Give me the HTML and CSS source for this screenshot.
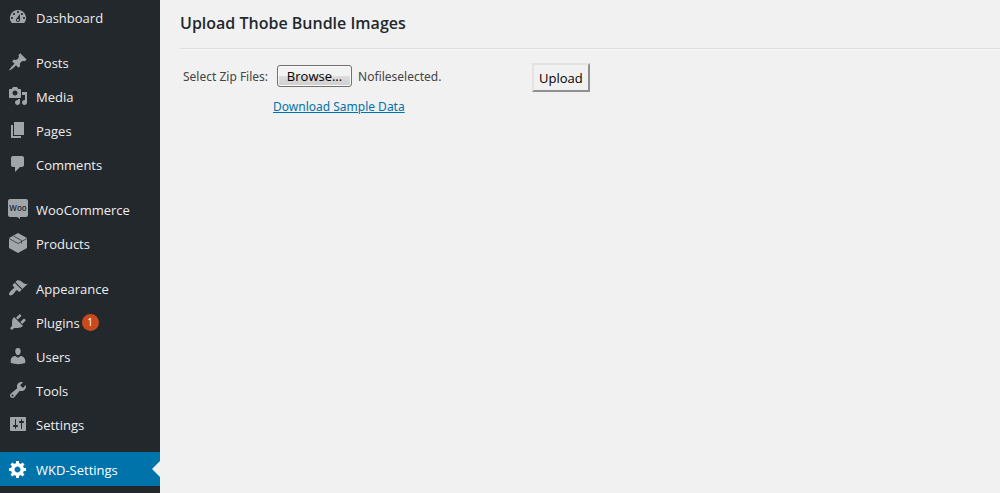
FILE: index.html
```html
<!DOCTYPE html>
<html lang="en">
<head>
    <meta charset="UTF-8">
    <meta name="viewport" content="width=device-width, initial-scale=1.0">
    <title>Upload Thobe Bundle Images</title>
    <link rel="stylesheet" href="styles.css">
</head>
<body>
    <nav class="sidebar">
        <ul class="menu">
            <li><a href="#dashboard">
                <svg class="icon" viewBox="0 0 20 20"><path d="M3.76 16h12.48A7.998 7.998 0 0 0 10 3a7.998 7.998 0 0 0-6.24 13zM10 4c.55 0 1 .45 1 1s-.45 1-1 1-1-.45-1-1 .45-1 1-1zM6 6c.55 0 1 .45 1 1s-.45 1-1 1-1-.45-1-1 .45-1 1-1zm8 0c.55 0 1 .45 1 1s-.45 1-1 1-1-.45-1-1 .45-1 1-1zm-5.37 5.55L12 7v6c0 1.1-.9 2-2 2s-2-.9-2-2c0-.57.24-1.08.63-1.45zM4 10c.55 0 1 .45 1 1s-.45 1-1 1-1-.45-1-1 .45-1 1-1zm12 0c.55 0 1 .45 1 1s-.45 1-1 1-1-.45-1-1 .45-1 1-1zm-5 3c0-.55-.45-1-1-1s-1 .45-1 1 .45 1 1 1 1-.45 1-1z"/></svg>
                <span class="name">Dashboard</span></a></li>
            <li class="group"><a href="#posts">
                <svg class="icon" viewBox="0 0 20 20"><path d="M10.44 3.02l1.82-1.82 6.36 6.35-1.83 1.82c-1.05-.68-2.48-.57-3.41.36l-.75.75c-.92.93-1.04 2.35-.35 3.41l-1.83 1.82-2.41-2.41-2.8 2.79c-.42.42-3.38 2.71-3.8 2.29s1.86-3.39 2.28-3.81l2.79-2.79L4.1 9.36l1.83-1.82c1.05.69 2.48.57 3.4-.36l.75-.75c.93-.92 1.05-2.35.36-3.41z"/></svg>
                <span class="name">Posts</span></a></li>
            <li><a href="#media">
                <svg class="icon" viewBox="0 0 20 20"><path d="M13 11V4c0-.55-.45-1-1-1h-1.67L9 1H5L3.67 3H2c-.55 0-1 .45-1 1v7c0 .55.45 1 1 1h10c.55 0 1-.45 1-1zM7 4.5c1.38 0 2.5 1.12 2.5 2.5S8.38 9.5 7 9.5 4.5 8.38 4.5 7 5.62 4.5 7 4.5zM14 6h5v10.5c0 1.38-1.12 2.5-2.5 2.5S14 17.88 14 16.5s1.12-2.5 2.5-2.5c.17 0 .34.02.5.05V9h-3V6zm-4 8.05V13h2v3.5c0 1.38-1.12 2.5-2.5 2.5S7 17.88 7 16.5 8.12 14 9.5 14c.17 0 .34.02.5.05z"/></svg>
                <span class="name">Media</span></a></li>
            <li><a href="#pages">
                <svg class="icon" viewBox="0 0 20 20"><path d="M6 15V2h10v13H6zm-1 1h8v2H3V5h2v11z"/></svg>
                <span class="name">Pages</span></a></li>
            <li><a href="#comments">
                <svg class="icon" viewBox="0 0 20 20"><path d="M5 2h9c1.1 0 2 .9 2 2v7c0 1.1-.9 2-2 2h-2l-5 5v-5H5c-1.1 0-2-.9-2-2V4c0-1.1.9-2 2-2z"/></svg>
                <span class="name">Comments</span></a></li>
            <li class="group"><a href="#woocommerce">
                <svg class="icon" viewBox="0 0 20 20"><path d="M2 0h16a2 2 0 0 1 2 2v14a2 2 0 0 1-2 2h-6v2l-3-2H2a2 2 0 0 1-2-2V2a2 2 0 0 1 2-2z"/><text class="woo" x="10" y="12" text-anchor="middle">Woo</text></svg>
                <span class="name">WooCommerce</span></a></li>
            <li><a href="#products">
                <svg class="icon" viewBox="0 0 20 20"><path d="M10 0l9 5v10l-9 5-9-5V5z"/><path class="seam" d="M1 5.5l9 5 9-5M5.5 3l8 4.500v3"/></svg>
                <span class="name">Products</span></a></li>
            <li class="group"><a href="#appearance">
                <svg class="icon" viewBox="0 0 20 20"><path d="M14.48 11.06L7.41 3.99l1.5-1.5c.5-.56 2.3-.47 3.51.32 1.21.8 1.43 1.28 2.91 2.1 1.18.64 2.45 1.26 4.45.85zm-.71.71L6.7 4.7 4.93 6.47c-.39.39-.39 1.02 0 1.41l1.06 1.06c.39.39.39 1.03 0 1.42-.6.6-1.43 1.11-2.21 1.69-.35.26-.7.53-1.01.84C1.43 14.23.4 16.08 1.4 17.07c.99 1 2.84-.03 4.18-1.36.31-.31.58-.66.85-1.02.57-.78 1.08-1.61 1.69-2.21.39-.39 1.02-.39 1.41 0l1.06 1.06c.39.39 1.02.39 1.41 0z"/></svg>
                <span class="name">Appearance</span></a></li>
            <li><a href="#plugins">
                <svg class="icon" viewBox="0 0 20 20"><path d="M13.11 4.36L9.87 7.6 8 5.73l3.24-3.24c.35-.34 1.05-.2 1.56.32.52.51.66 1.21.31 1.55zm-8 1.77l.91-1.12 9.01 9.01-1.19.84c-.71.71-2.63 1.16-3.82 1.16H6.14L4.9 17.26c-.59.59-1.54.59-2.12 0-.59-.58-.59-1.53 0-2.12l1.24-1.24v-3.88c0-1.13.4-3.19 1.09-3.89zm7.26 3.97l3.24-3.24c.34-.35 1.04-.21 1.55.31.52.51.66 1.21.31 1.55l-3.24 3.25z"/></svg>
                <span class="name">Plugins</span><span class="badge">1</span></a></li>
            <li><a href="#users">
                <svg class="icon" viewBox="0 0 20 20"><path d="M10 9.25c-2.27 0-2.73-3.44-2.73-3.44C7 4.02 7.82 2 9.97 2c2.16 0 2.98 2.02 2.71 3.81 0 0-.41 3.44-2.68 3.44zm0 2.57L12.72 10c2.39 0 4.52 2.33 4.52 4.53v2.49s-3.65 1.13-7.24 1.13c-3.65 0-7.24-1.13-7.24-1.13v-2.49c0-2.25 1.94-4.48 4.47-4.48z"/></svg>
                <span class="name">Users</span></a></li>
            <li><a href="#tools">
                <svg class="icon" viewBox="0 0 20 20"><path d="M16.68 9.77c-1.34 1.34-3.3 1.67-4.95.99l-5.41 6.52c-.99.99-2.59.99-3.58 0s-.99-2.59 0-3.57l6.52-5.42c-.68-1.65-.35-3.61.99-4.95 1.28-1.28 3.12-1.62 4.72-1.06l-2.89 2.89 2.82 2.82 2.86-2.87c.53 1.58.18 3.39-1.08 4.65zM3.81 16.21c.4.39 1.04.39 1.43 0 .4-.4.4-1.04 0-1.43-.39-.4-1.03-.4-1.43 0-.39.39-.39 1.03 0 1.43z"/></svg>
                <span class="name">Tools</span></a></li>
            <li><a href="#settings">
                <svg class="icon" viewBox="0 0 20 20"><path d="M18 16V4c0-.55-.45-1-1-1H3c-.55 0-1 .45-1 1v12c0 .55.45 1 1 1h14c.55 0 1-.45 1-1zM8 11h1c.55 0 1 .45 1 1s-.45 1-1 1H8v1.5c0 .28-.22.5-.5.5s-.5-.22-.5-.5V13H6c-.55 0-1-.45-1-1s.45-1 1-1h1V5.5c0-.28.22-.5.5-.5s.5.22.5.5V11zm5-2h-1c-.55 0-1-.45-1-1s.45-1 1-1h1V5.5c0-.28.22-.5.5-.5s.5.22.5.5V7h1c.55 0 1 .45 1 1s-.45 1-1 1h-1v5.5c0 .28-.22.5-.5.5s-.5-.22-.5-.5V9z"/></svg>
                <span class="name">Settings</span></a></li>
            <li class="group active"><a href="#wkd-settings">
                <svg class="icon" viewBox="0 0 20 20"><path d="M18 12h-2.18c-.17.7-.44 1.35-.81 1.93l1.54 1.54-2.1 2.1-1.54-1.54c-.58.36-1.23.63-1.91.79V19H8v-2.18c-.68-.16-1.33-.43-1.91-.79l-1.54 1.54-2.12-2.12 1.54-1.54c-.36-.58-.63-1.23-.79-1.91H1V9.03h2.17c.16-.7.44-1.35.8-1.94L2.43 5.55l2.1-2.1 1.54 1.54c.58-.37 1.24-.64 1.93-.81V2h3v2.18c.68.16 1.33.43 1.91.79l1.54-1.54 2.12 2.12-1.54 1.54c.36.59.64 1.24.8 1.94H18V12zm-8.5 1.5c1.66 0 3-1.34 3-3s-1.34-3-3-3-3 1.34-3 3 1.34 3 3 3z"/></svg>
                <span class="name">WKD-Settings</span></a></li>
        </ul>
    </nav>

    <main class="content">
        <h1>Upload Thobe Bundle Images</h1>
        <form class="upload-form">
            <div class="picker">
                <div class="file-row">
                    <label for="zip">Select Zip Files:</label>
                    <input class="file-input" type="file" id="zip" accept=".zip" tabindex="-1">
                    <button class="browse" type="button" id="browse">Browse...</button>
                    <span id="file-name">Nofileselected.</span>
                </div>
                <a class="sample" href="#sample">Download Sample Data</a>
            </div>
            <button class="upload" type="submit">Upload</button>
        </form>
    </main>

    <script>
        const zip = document.getElementById('zip');

        document.getElementById('browse').addEventListener('click', function() {
            zip.click();
        });

        // Show the chosen file next to the button
        zip.addEventListener('change', function() {
            if (zip.files.length) {
                document.getElementById('file-name').textContent = zip.files[0].name;
            }
        });
    </script>
</body>
</html>
```
FILE: styles.css
```css
body {
    display: flex;
    min-height: 100vh;
    margin: 0;
    background: #f1f1f1;
    color: #444;
    font-family: "Noto Sans", "Open Sans", sans-serif;
    font-size: 12px;
}

/* Admin menu */
.sidebar {
    flex: 0 0 160px;
    background: #23282d;
}

.menu {
    list-style: none;
    margin: 0;
    padding: 0;
}

.menu a {
    display: flex;
    align-items: center;
    height: 34px;
    padding-left: 8px;
    color: #eee;
    font-family: "Open Sans", sans-serif;
    font-size: 13px;
    text-decoration: none;
}

.menu .group {
    margin-top: 11px;
}

.name {
    padding-top: 2px;
}

.icon {
    width: 20px;
    height: 20px;
    margin-right: 8px;
    fill: #a0a5aa;
    overflow: visible;
}

.icon .woo {
    fill: #23282d;
    font-family: "Open Sans", sans-serif;
    font-size: 8px;
    font-weight: 600;
}

.icon .seam {
    fill: none;
    stroke: #23282d;
    stroke-width: 0.7;
}

.badge {
    width: 17px;
    margin-left: 2px;
    border-radius: 9px;
    background: #ca4a1f;
    color: #fff;
    font-size: 10px;
    line-height: 17px;
    text-align: center;
}

.active {
    position: relative;
    background: #0073aa;
}

.menu .active a {
    color: #fff;
}

.active .icon {
    fill: #fff;
}

/* Arrow pointing at the content */
.active::after {
    content: "";
    position: absolute;
    top: 9px;
    right: 0;
    border: 8px solid transparent;
    border-right-color: #f1f1f1;
    border-left: 0;
}

/* Upload page */
.content {
    flex: 1;
    padding-left: 20px;
}

h1 {
    margin: 0;
    padding: 12px 0 14px;
    border-bottom: 1px solid #ddd;
    box-shadow: 0 1px 0 #f9f9f9;
    color: #23282d;
    font-family: "Open Sans", sans-serif;
    font-size: 16px;
    font-weight: 600;
    line-height: 22px;
}

.upload-form {
    display: flex;
    align-items: flex-start;
    padding: 14px 3px;
}

.picker {
    flex: 0 0 349px;
}

.file-row {
    display: flex;
    align-items: center;
    height: 26px;
}

.file-input {
    position: absolute;
    width: 1px;
    height: 1px;
    opacity: 0;
}

.browse {
    width: 75px;
    height: 22px;
    margin: 0 6px 0 9px;
    padding: 0;
    border: 1px solid #707070;
    border-radius: 3px;
    background: linear-gradient(#f2f2f2 50%, #ddd 50%, #cfcfcf);
    box-shadow: inset 0 0 0 1px #fafafa;
    color: #000;
    font-family: "Open Sans", sans-serif;
    font-size: 13px;
    line-height: 18px;
}

.sample {
    display: block;
    margin: 8px 0 0 90px;
    color: #0073aa;
    line-height: 20px;
}

.upload {
    height: 29px;
    padding: 0 5px;
    border: 2px outset #e3e3e3;
    background: #f1f1f1;
    color: #000;
    font-family: "Open Sans", sans-serif;
    font-size: 13px;
}
```
